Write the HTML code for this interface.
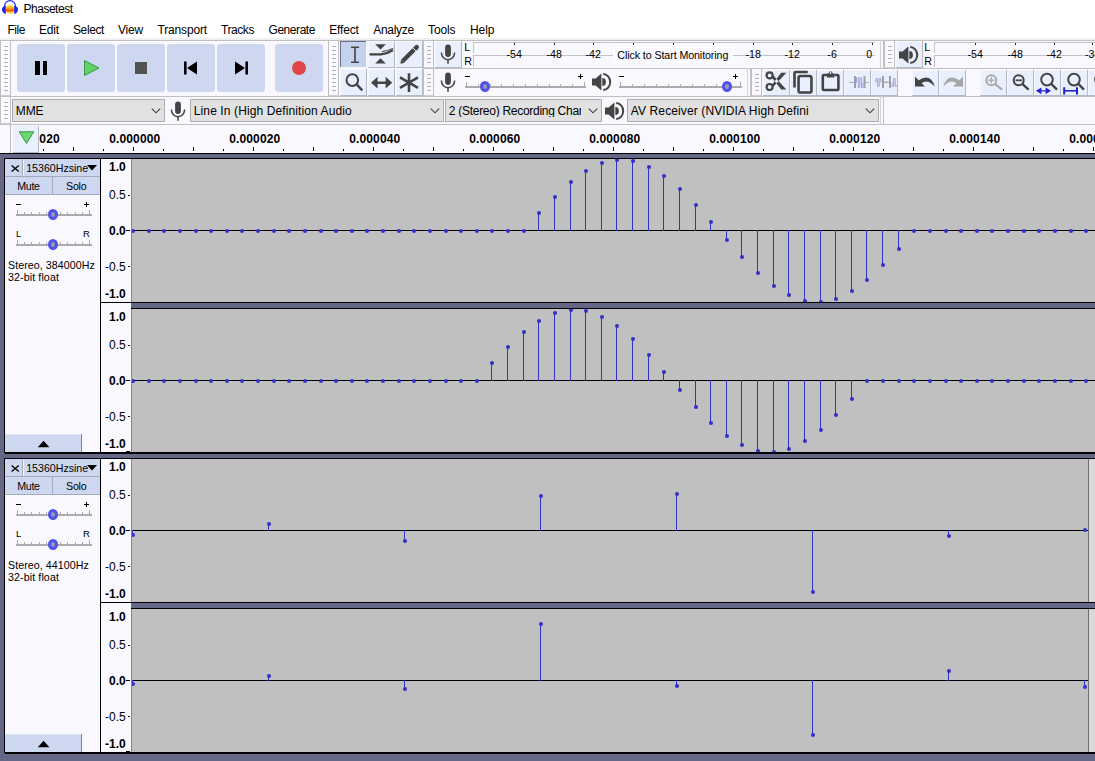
<!DOCTYPE html><html><head><meta charset="utf-8"><title>Phasetest</title><style>
html,body{margin:0;padding:0;}body{width:1095px;height:761px;position:relative;overflow:hidden;background:#fff;font-family:"Liberation Sans",sans-serif;}
div,svg,span{position:absolute;display:block;}span{white-space:pre;line-height:1;}
</style></head><body>
<svg style="left:0px;top:0px;" width="20" height="16" viewBox="0 0 20 16">
<defs><linearGradient id="wv" x1="0" y1="0" x2="0" y2="1"><stop offset="0" stop-color="#FFF3A0"/><stop offset="0.25" stop-color="#FFC21E"/><stop offset="0.5" stop-color="#FF8A00"/><stop offset="0.58" stop-color="#FF1E00"/><stop offset="0.68" stop-color="#FF8A00"/><stop offset="0.85" stop-color="#FFD23C"/><stop offset="1" stop-color="#FFF3A0"/></linearGradient></defs>
<ellipse cx="10" cy="9.4" rx="4.3" ry="4.8" fill="url(#wv)"/>
<path d="M4.6 6.4 V5.8 A5.4 5.2 0 0 1 15.4 5.8 V6.4" fill="none" stroke="#2222F2" stroke-width="1.2"/>
<path d="M5.8 5.4 Q1.6 6.6 2 9.8 Q2.4 13.4 5.8 14 Z" fill="#1E1EEE"/>
<path d="M14.2 5.4 Q18.4 6.6 18 9.8 Q17.6 13.4 14.2 14 Z" fill="#1E1EEE"/>
</svg>
<div style="left:0px;top:41px;width:1095px;height:84px;background:#F8F8FE;"></div>
<div style="left:0px;top:38px;width:1095px;height:2px;background:#F0F0F0;"></div>
<div style="left:0px;top:40px;width:1095px;height:1px;background:#C0C0C0;"></div>
<div style="left:423px;top:68px;width:672px;height:1px;background:#C0C0C0;"></div>
<div style="left:0px;top:96px;width:1095px;height:1px;background:#C0C0C0;"></div>
<div style="left:0px;top:124px;width:1095px;height:1px;background:#C0C0C0;"></div>
<div style="left:881px;top:97px;width:214px;height:27px;background:#F8F8FE;"></div>
<div style="left:0px;top:40px;width:329px;height:1px;background:#C0C0C0;"></div>
<div style="left:0px;top:96px;width:329px;height:1px;background:#C0C0C0;"></div>
<div style="left:0px;top:40px;width:1px;height:57px;background:#C0C0C0;"></div>
<div style="left:328px;top:40px;width:1px;height:57px;background:#C0C0C0;"></div>
<div style="left:10px;top:40px;width:1px;height:57px;background:#C0C0C0;"></div>
<div style="left:1px;top:95px;width:9px;height:1px;background:#CFCFD2;"></div>
<div style="left:4px;top:46px;width:4px;height:1px;background:#B2B2B6;"></div>
<div style="left:4px;top:50px;width:4px;height:1px;background:#B2B2B6;"></div>
<div style="left:4px;top:54px;width:4px;height:1px;background:#B2B2B6;"></div>
<div style="left:4px;top:58px;width:4px;height:1px;background:#B2B2B6;"></div>
<div style="left:4px;top:62px;width:4px;height:1px;background:#B2B2B6;"></div>
<div style="left:4px;top:66px;width:4px;height:1px;background:#B2B2B6;"></div>
<div style="left:4px;top:70px;width:4px;height:1px;background:#B2B2B6;"></div>
<div style="left:4px;top:74px;width:4px;height:1px;background:#B2B2B6;"></div>
<div style="left:4px;top:78px;width:4px;height:1px;background:#B2B2B6;"></div>
<div style="left:4px;top:82px;width:4px;height:1px;background:#B2B2B6;"></div>
<div style="left:4px;top:86px;width:4px;height:1px;background:#B2B2B6;"></div>
<div style="left:4px;top:90px;width:4px;height:1px;background:#B2B2B6;"></div>
<div style="left:328px;top:40px;width:96px;height:1px;background:#C0C0C0;"></div>
<div style="left:328px;top:96px;width:96px;height:1px;background:#C0C0C0;"></div>
<div style="left:328px;top:40px;width:1px;height:57px;background:#C0C0C0;"></div>
<div style="left:423px;top:40px;width:1px;height:57px;background:#C0C0C0;"></div>
<div style="left:338px;top:40px;width:1px;height:57px;background:#C0C0C0;"></div>
<div style="left:329px;top:95px;width:9px;height:1px;background:#CFCFD2;"></div>
<div style="left:332px;top:46px;width:4px;height:1px;background:#B2B2B6;"></div>
<div style="left:332px;top:50px;width:4px;height:1px;background:#B2B2B6;"></div>
<div style="left:332px;top:54px;width:4px;height:1px;background:#B2B2B6;"></div>
<div style="left:332px;top:58px;width:4px;height:1px;background:#B2B2B6;"></div>
<div style="left:332px;top:62px;width:4px;height:1px;background:#B2B2B6;"></div>
<div style="left:332px;top:66px;width:4px;height:1px;background:#B2B2B6;"></div>
<div style="left:332px;top:70px;width:4px;height:1px;background:#B2B2B6;"></div>
<div style="left:332px;top:74px;width:4px;height:1px;background:#B2B2B6;"></div>
<div style="left:332px;top:78px;width:4px;height:1px;background:#B2B2B6;"></div>
<div style="left:332px;top:82px;width:4px;height:1px;background:#B2B2B6;"></div>
<div style="left:332px;top:86px;width:4px;height:1px;background:#B2B2B6;"></div>
<div style="left:332px;top:90px;width:4px;height:1px;background:#B2B2B6;"></div>
<div style="left:423px;top:40px;width:458px;height:1px;background:#C0C0C0;"></div>
<div style="left:423px;top:68px;width:458px;height:1px;background:#C0C0C0;"></div>
<div style="left:423px;top:40px;width:1px;height:29px;background:#C0C0C0;"></div>
<div style="left:880px;top:40px;width:1px;height:29px;background:#D2D2D8;"></div>
<div style="left:433px;top:40px;width:1px;height:29px;background:#C0C0C0;"></div>
<div style="left:424px;top:67px;width:9px;height:1px;background:#CFCFD2;"></div>
<div style="left:427px;top:46px;width:4px;height:1px;background:#B2B2B6;"></div>
<div style="left:427px;top:50px;width:4px;height:1px;background:#B2B2B6;"></div>
<div style="left:427px;top:54px;width:4px;height:1px;background:#B2B2B6;"></div>
<div style="left:427px;top:58px;width:4px;height:1px;background:#B2B2B6;"></div>
<div style="left:427px;top:62px;width:4px;height:1px;background:#B2B2B6;"></div>
<div style="left:884px;top:40px;width:217px;height:1px;background:#C0C0C0;"></div>
<div style="left:884px;top:68px;width:217px;height:1px;background:#C0C0C0;"></div>
<div style="left:883px;top:40px;width:2px;height:29px;background:#C0C0C0;"></div>
<div style="left:1100px;top:40px;width:1px;height:29px;background:#C0C0C0;"></div>
<div style="left:894px;top:40px;width:1px;height:29px;background:#C0C0C0;"></div>
<div style="left:885px;top:67px;width:9px;height:1px;background:#CFCFD2;"></div>
<div style="left:888px;top:46px;width:4px;height:1px;background:#B2B2B6;"></div>
<div style="left:888px;top:50px;width:4px;height:1px;background:#B2B2B6;"></div>
<div style="left:888px;top:54px;width:4px;height:1px;background:#B2B2B6;"></div>
<div style="left:888px;top:58px;width:4px;height:1px;background:#B2B2B6;"></div>
<div style="left:888px;top:62px;width:4px;height:1px;background:#B2B2B6;"></div>
<div style="left:423px;top:68px;width:325px;height:1px;background:#C0C0C0;"></div>
<div style="left:423px;top:96px;width:325px;height:1px;background:#C0C0C0;"></div>
<div style="left:423px;top:68px;width:1px;height:29px;background:#C0C0C0;"></div>
<div style="left:747px;top:68px;width:1px;height:29px;background:#D2D2D8;"></div>
<div style="left:433px;top:68px;width:1px;height:29px;background:#C0C0C0;"></div>
<div style="left:424px;top:95px;width:9px;height:1px;background:#CFCFD2;"></div>
<div style="left:427px;top:74px;width:4px;height:1px;background:#B2B2B6;"></div>
<div style="left:427px;top:78px;width:4px;height:1px;background:#B2B2B6;"></div>
<div style="left:427px;top:82px;width:4px;height:1px;background:#B2B2B6;"></div>
<div style="left:427px;top:86px;width:4px;height:1px;background:#B2B2B6;"></div>
<div style="left:427px;top:90px;width:4px;height:1px;background:#B2B2B6;"></div>
<div style="left:751px;top:68px;width:350px;height:1px;background:#C0C0C0;"></div>
<div style="left:751px;top:96px;width:350px;height:1px;background:#C0C0C0;"></div>
<div style="left:750px;top:68px;width:2px;height:29px;background:#C0C0C0;"></div>
<div style="left:1100px;top:68px;width:1px;height:29px;background:#C0C0C0;"></div>
<div style="left:761px;top:68px;width:1px;height:29px;background:#C0C0C0;"></div>
<div style="left:752px;top:95px;width:9px;height:1px;background:#CFCFD2;"></div>
<div style="left:755px;top:74px;width:4px;height:1px;background:#B2B2B6;"></div>
<div style="left:755px;top:78px;width:4px;height:1px;background:#B2B2B6;"></div>
<div style="left:755px;top:82px;width:4px;height:1px;background:#B2B2B6;"></div>
<div style="left:755px;top:86px;width:4px;height:1px;background:#B2B2B6;"></div>
<div style="left:755px;top:90px;width:4px;height:1px;background:#B2B2B6;"></div>
<div style="left:0px;top:96px;width:881px;height:1px;background:#C0C0C0;"></div>
<div style="left:0px;top:124px;width:881px;height:1px;background:#C0C0C0;"></div>
<div style="left:0px;top:96px;width:1px;height:29px;background:#C0C0C0;"></div>
<div style="left:880px;top:96px;width:1px;height:29px;background:#D2D2D8;"></div>
<div style="left:10px;top:96px;width:1px;height:29px;background:#C0C0C0;"></div>
<div style="left:1px;top:123px;width:9px;height:1px;background:#CFCFD2;"></div>
<div style="left:4px;top:102px;width:4px;height:1px;background:#B2B2B6;"></div>
<div style="left:4px;top:106px;width:4px;height:1px;background:#B2B2B6;"></div>
<div style="left:4px;top:110px;width:4px;height:1px;background:#B2B2B6;"></div>
<div style="left:4px;top:114px;width:4px;height:1px;background:#B2B2B6;"></div>
<div style="left:4px;top:118px;width:4px;height:1px;background:#B2B2B6;"></div>
<div style="left:883px;top:97px;width:1px;height:27px;background:#C0C0C0;"></div>
<div style="left:17px;top:44px;width:48px;height:48px;background:#CDD8F0;border-radius:3px;"></div>
<div style="left:67px;top:44px;width:48px;height:48px;background:#CDD8F0;border-radius:3px;"></div>
<div style="left:117px;top:44px;width:48px;height:48px;background:#CDD8F0;border-radius:3px;"></div>
<div style="left:167px;top:44px;width:48px;height:48px;background:#CDD8F0;border-radius:3px;"></div>
<div style="left:217px;top:44px;width:48px;height:48px;background:#CDD8F0;border-radius:3px;"></div>
<div style="left:275px;top:44px;width:48px;height:48px;background:#CDD8F0;border-radius:3px;"></div>
<div style="left:35px;top:61px;width:4.5px;height:14px;background:#000;"></div>
<div style="left:42.5px;top:61px;width:4.5px;height:14px;background:#000;"></div>
<svg style="left:67px;top:44px;" width="48" height="48" viewBox="0 0 48 48"><path d="M17.5 16.5 L32 24 L17.5 31.5 Z" fill="#62D167" stroke="#3E9A46" stroke-width="1" stroke-linejoin="round"/></svg>
<div style="left:135px;top:62px;width:12px;height:12px;background:#525252;"></div>
<svg style="left:167px;top:44px;" width="48" height="48" viewBox="0 0 48 48"><rect x="17" y="17.5" width="2.6" height="13" fill="#000"/><path d="M30 17.5 V30.5 L20 24 Z" fill="#000"/></svg>
<svg style="left:217px;top:44px;" width="48" height="48" viewBox="0 0 48 48"><rect x="28.4" y="17.5" width="2.6" height="13" fill="#000"/><path d="M18 17.5 V30.5 L28 24 Z" fill="#000"/></svg>
<div style="left:292px;top:61px;width:14px;height:14px;background:#E0454A;border-radius:7px;"></div>
<div style="left:340px;top:41px;width:27px;height:27px;background:#C5D2EE;"></div>
<div style="left:340px;top:41px;width:27px;height:1px;background:#6B7086;"></div>
<div style="left:340px;top:41px;width:1px;height:27px;background:#6B7086;"></div>
<div style="left:340px;top:67px;width:27px;height:1px;background:#F4F6FD;"></div>
<div style="left:366px;top:41px;width:1px;height:27px;background:#F4F6FD;"></div>
<div style="left:368px;top:41px;width:27px;height:27px;background:#E9EFFC;"></div>
<div style="left:368px;top:67px;width:27px;height:1px;background:#B4B9C8;"></div>
<div style="left:394px;top:41px;width:1px;height:27px;background:#B4B9C8;"></div>
<div style="left:368px;top:41px;width:26px;height:1px;background:#F6F8FE;"></div>
<div style="left:368px;top:41px;width:1px;height:26px;background:#F6F8FE;"></div>
<div style="left:396px;top:41px;width:27px;height:27px;background:#E9EFFC;"></div>
<div style="left:396px;top:67px;width:27px;height:1px;background:#B4B9C8;"></div>
<div style="left:422px;top:41px;width:1px;height:27px;background:#B4B9C8;"></div>
<div style="left:396px;top:41px;width:26px;height:1px;background:#F6F8FE;"></div>
<div style="left:396px;top:41px;width:1px;height:26px;background:#F6F8FE;"></div>
<div style="left:340px;top:69px;width:27px;height:27px;background:#E9EFFC;"></div>
<div style="left:340px;top:95px;width:27px;height:1px;background:#B4B9C8;"></div>
<div style="left:366px;top:69px;width:1px;height:27px;background:#B4B9C8;"></div>
<div style="left:340px;top:69px;width:26px;height:1px;background:#F6F8FE;"></div>
<div style="left:340px;top:69px;width:1px;height:26px;background:#F6F8FE;"></div>
<div style="left:368px;top:69px;width:27px;height:27px;background:#E9EFFC;"></div>
<div style="left:368px;top:95px;width:27px;height:1px;background:#B4B9C8;"></div>
<div style="left:394px;top:69px;width:1px;height:27px;background:#B4B9C8;"></div>
<div style="left:368px;top:69px;width:26px;height:1px;background:#F6F8FE;"></div>
<div style="left:368px;top:69px;width:1px;height:26px;background:#F6F8FE;"></div>
<div style="left:396px;top:69px;width:27px;height:27px;background:#E9EFFC;"></div>
<div style="left:396px;top:95px;width:27px;height:1px;background:#B4B9C8;"></div>
<div style="left:422px;top:69px;width:1px;height:27px;background:#B4B9C8;"></div>
<div style="left:396px;top:69px;width:26px;height:1px;background:#F6F8FE;"></div>
<div style="left:396px;top:69px;width:1px;height:26px;background:#F6F8FE;"></div>
<svg style="left:340px;top:41px;" width="27" height="27" viewBox="0 0 27 27"><path d="M11 6.3 H19 M11 21.3 H19 M15 6.3 V21.3" stroke="#444" stroke-width="1.6" fill="none"/></svg>
<svg style="left:368px;top:41px;" width="27" height="27" viewBox="0 0 27 27"><path d="M7.2 3.2 H17.8 L12.5 8.4 Z M7.2 22.4 H17.8 L12.5 17.3 Z" fill="#444"/><path d="M1.5 13.4 H13 Q19.5 12.6 25 8.9" stroke="#444" stroke-width="2.4" fill="none"/><path d="M14 10.6 Q20 9.8 25 7.4" stroke="#444" stroke-width="1" fill="none"/></svg>
<svg style="left:396px;top:41px;" width="27" height="27" viewBox="0 0 27 27"><path d="M6.8 20 L18 8.8" stroke="#444" stroke-width="4.4"/><path d="M4.3 22.7 L5.2 18.4 L8.6 21.8 Z" fill="#444"/><path d="M19.2 7.6 L20.7 6.1" stroke="#444" stroke-width="4.4" stroke-linecap="round"/><path d="M16.3 6.3 L20.7 10.7" stroke="#E9EFFC" stroke-width="0.9"/></svg>
<svg style="left:340px;top:69px;" width="27" height="27" viewBox="0 0 27 27"><circle cx="12.3" cy="11.1" r="5.8" fill="none" stroke="#444" stroke-width="2"/><path d="M16.4 15.2 L22.3 21.4" stroke="#444" stroke-width="2.4"/></svg>
<svg style="left:368px;top:69px;" width="27" height="27" viewBox="0 0 27 27"><path d="M3 13.7 L9.6 7.8 V12.4 H17.6 V7.8 L24.2 13.7 L17.6 19.6 V15 H9.6 V19.6 Z" fill="#444"/></svg>
<svg style="left:396px;top:69px;" width="27" height="27" viewBox="0 0 27 27"><path d="M13 4.2 V23 M4 8.4 L22 18.8 M22 8.4 L4 18.8" stroke="#444" stroke-width="2.6" fill="none"/></svg>
<div style="left:435px;top:41px;width:27px;height:27px;background:#E9EFFC;"></div>
<div style="left:435px;top:67px;width:27px;height:1px;background:#B4B9C8;"></div>
<div style="left:461px;top:41px;width:1px;height:27px;background:#B4B9C8;"></div>
<div style="left:435px;top:41px;width:26px;height:1px;background:#F6F8FE;"></div>
<div style="left:435px;top:41px;width:1px;height:26px;background:#F6F8FE;"></div>
<svg style="left:437.9px;top:43.5px;" width="20" height="21" viewBox="0 0 20 21"><rect x="7.1" y="0.6" width="5.8" height="12.4" rx="2.9" fill="#444"/><path d="M3.5 8.4 V9.2 a6.5 6.5 0 0 0 13 0 V8.4" fill="none" stroke="#444" stroke-width="1.5"/><path d="M10 15.6 V19.8" stroke="#444" stroke-width="1.5"/></svg>
<div style="left:473px;top:42px;width:402px;height:1px;background:#C2C2C8;"></div>
<div style="left:473px;top:42px;width:1px;height:11px;background:#C2C2C8;"></div>
<div style="left:473px;top:55px;width:402px;height:1px;background:#C2C2C8;"></div>
<div style="left:473px;top:55px;width:1px;height:12px;background:#C2C2C8;"></div>
<div style="left:875px;top:42px;width:1px;height:25px;background:#FFFFFF;"></div>
<div style="left:633px;top:43px;width:1px;height:2px;background:#222;"></div>
<div style="left:673px;top:43px;width:1px;height:2px;background:#222;"></div>
<div style="left:713px;top:43px;width:1px;height:2px;background:#222;"></div>
<div style="left:514px;top:43px;width:1px;height:2px;background:#222;"></div>
<div style="left:554px;top:43px;width:1px;height:2px;background:#222;"></div>
<div style="left:593px;top:43px;width:1px;height:2px;background:#222;"></div>
<div style="left:753px;top:43px;width:1px;height:2px;background:#222;"></div>
<div style="left:792px;top:43px;width:1px;height:2px;background:#222;"></div>
<div style="left:832px;top:43px;width:1px;height:2px;background:#222;"></div>
<div style="left:872px;top:43px;width:1px;height:2px;background:#222;"></div>
<div style="left:613px;top:47px;width:120px;height:16px;background:#F8F8FE;border:1px solid #FFFFFF;box-sizing:border-box;"></div>
<div style="left:896px;top:41px;width:27px;height:27px;background:#E9EFFC;"></div>
<div style="left:896px;top:67px;width:27px;height:1px;background:#B4B9C8;"></div>
<div style="left:922px;top:41px;width:1px;height:27px;background:#B4B9C8;"></div>
<div style="left:896px;top:41px;width:26px;height:1px;background:#F6F8FE;"></div>
<div style="left:896px;top:41px;width:1px;height:26px;background:#F6F8FE;"></div>
<svg style="left:898px;top:44.5px;" width="22" height="20" viewBox="0 0 22 20"><g transform="translate(1,10)"><path d="M0 -3.6 H3.6 L9.4 -8.4 V8.4 L3.6 3.6 H0 Z" fill="#444"/><path d="M10.3 -4.1 A3.6 4.1 0 0 1 10.3 4.1 Z" fill="#444"/><path d="M11.2 -8 A7 8 0 0 1 11.2 8" fill="none" stroke="#444" stroke-width="2"/></g></svg>
<div style="left:934px;top:42px;width:170px;height:1px;background:#C2C2C8;"></div>
<div style="left:934px;top:42px;width:1px;height:11px;background:#C2C2C8;"></div>
<div style="left:934px;top:55px;width:170px;height:1px;background:#C2C2C8;"></div>
<div style="left:934px;top:55px;width:1px;height:12px;background:#C2C2C8;"></div>
<div style="left:975px;top:43px;width:1px;height:2px;background:#222;"></div>
<div style="left:1015px;top:43px;width:1px;height:2px;background:#222;"></div>
<div style="left:1054px;top:43px;width:1px;height:2px;background:#222;"></div>
<div style="left:1092px;top:43px;width:1px;height:2px;background:#222;"></div>
<svg style="left:437.9px;top:72.3px;" width="20" height="21" viewBox="0 0 20 21"><rect x="7.1" y="0.6" width="5.8" height="12.4" rx="2.9" fill="#444"/><path d="M3.5 8.4 V9.2 a6.5 6.5 0 0 0 13 0 V8.4" fill="none" stroke="#444" stroke-width="1.5"/><path d="M10 15.6 V19.8" stroke="#444" stroke-width="1.5"/></svg>
<div style="left:465px;top:86px;width:121px;height:2px;background:#ABABAB;"></div>
<div style="left:466px;top:82px;width:1px;height:4px;background:#ABABAB;"></div>
<div style="left:478px;top:84px;width:1px;height:2px;background:#ABABAB;"></div>
<div style="left:490px;top:84px;width:1px;height:2px;background:#ABABAB;"></div>
<div style="left:501px;top:84px;width:1px;height:2px;background:#ABABAB;"></div>
<div style="left:513px;top:84px;width:1px;height:2px;background:#ABABAB;"></div>
<div style="left:525px;top:84px;width:1px;height:2px;background:#ABABAB;"></div>
<div style="left:537px;top:84px;width:1px;height:2px;background:#ABABAB;"></div>
<div style="left:549px;top:84px;width:1px;height:2px;background:#ABABAB;"></div>
<div style="left:560px;top:84px;width:1px;height:2px;background:#ABABAB;"></div>
<div style="left:572px;top:84px;width:1px;height:2px;background:#ABABAB;"></div>
<div style="left:584px;top:82px;width:1px;height:4px;background:#ABABAB;"></div>
<div style="left:480px;top:81.0px;width:10px;height:11px;border-radius:5px/5.5px;background:#9A9AB4;border:3.7px solid #4F52E8;box-sizing:border-box;"></div>
<div style="left:465px;top:76px;width:5px;height:1px;background:#000;"></div>
<div style="left:578px;top:76px;width:5px;height:1px;background:#000;"></div>
<div style="left:580px;top:74px;width:1px;height:5px;background:#000;"></div>
<svg style="left:590.5px;top:72.3px;" width="22" height="20" viewBox="0 0 22 20"><g transform="translate(1,10)"><path d="M0 -3.6 H3.6 L9.4 -8.4 V8.4 L3.6 3.6 H0 Z" fill="#444"/><path d="M10.3 -4.1 A3.6 4.1 0 0 1 10.3 4.1 Z" fill="#444"/><path d="M11.2 -8 A7 8 0 0 1 11.2 8" fill="none" stroke="#444" stroke-width="2"/></g></svg>
<div style="left:619px;top:86px;width:123px;height:2px;background:#ABABAB;"></div>
<div style="left:620px;top:82px;width:1px;height:4px;background:#ABABAB;"></div>
<div style="left:632px;top:84px;width:1px;height:2px;background:#ABABAB;"></div>
<div style="left:644px;top:84px;width:1px;height:2px;background:#ABABAB;"></div>
<div style="left:656px;top:84px;width:1px;height:2px;background:#ABABAB;"></div>
<div style="left:668px;top:84px;width:1px;height:2px;background:#ABABAB;"></div>
<div style="left:680px;top:84px;width:1px;height:2px;background:#ABABAB;"></div>
<div style="left:692px;top:84px;width:1px;height:2px;background:#ABABAB;"></div>
<div style="left:704px;top:84px;width:1px;height:2px;background:#ABABAB;"></div>
<div style="left:716px;top:84px;width:1px;height:2px;background:#ABABAB;"></div>
<div style="left:728px;top:84px;width:1px;height:2px;background:#ABABAB;"></div>
<div style="left:740px;top:82px;width:1px;height:4px;background:#ABABAB;"></div>
<div style="left:722px;top:81.0px;width:10px;height:11px;border-radius:5px/5.5px;background:#9A9AB4;border:3.7px solid #4F52E8;box-sizing:border-box;"></div>
<div style="left:619px;top:76px;width:5px;height:1px;background:#000;"></div>
<div style="left:733px;top:76px;width:5px;height:1px;background:#000;"></div>
<div style="left:735px;top:74px;width:1px;height:5px;background:#000;"></div>
<div style="left:763px;top:70px;width:27px;height:26px;background:#E9EFFC;"></div>
<div style="left:763px;top:95px;width:27px;height:1px;background:#B4B9C8;"></div>
<div style="left:789px;top:70px;width:1px;height:26px;background:#B4B9C8;"></div>
<div style="left:763px;top:70px;width:26px;height:1px;background:#F6F8FE;"></div>
<div style="left:763px;top:70px;width:1px;height:25px;background:#F6F8FE;"></div>
<div style="left:790px;top:70px;width:27px;height:26px;background:#E9EFFC;"></div>
<div style="left:790px;top:95px;width:27px;height:1px;background:#B4B9C8;"></div>
<div style="left:816px;top:70px;width:1px;height:26px;background:#B4B9C8;"></div>
<div style="left:790px;top:70px;width:26px;height:1px;background:#F6F8FE;"></div>
<div style="left:790px;top:70px;width:1px;height:25px;background:#F6F8FE;"></div>
<div style="left:817px;top:70px;width:27px;height:26px;background:#E9EFFC;"></div>
<div style="left:817px;top:95px;width:27px;height:1px;background:#B4B9C8;"></div>
<div style="left:843px;top:70px;width:1px;height:26px;background:#B4B9C8;"></div>
<div style="left:817px;top:70px;width:26px;height:1px;background:#F6F8FE;"></div>
<div style="left:817px;top:70px;width:1px;height:25px;background:#F6F8FE;"></div>
<div style="left:844px;top:70px;width:27px;height:26px;background:#E9EFFC;"></div>
<div style="left:844px;top:95px;width:27px;height:1px;background:#B4B9C8;"></div>
<div style="left:870px;top:70px;width:1px;height:26px;background:#B4B9C8;"></div>
<div style="left:844px;top:70px;width:26px;height:1px;background:#F6F8FE;"></div>
<div style="left:844px;top:70px;width:1px;height:25px;background:#F6F8FE;"></div>
<div style="left:871px;top:70px;width:27px;height:26px;background:#E9EFFC;"></div>
<div style="left:871px;top:95px;width:27px;height:1px;background:#B4B9C8;"></div>
<div style="left:897px;top:70px;width:1px;height:26px;background:#B4B9C8;"></div>
<div style="left:871px;top:70px;width:26px;height:1px;background:#F6F8FE;"></div>
<div style="left:871px;top:70px;width:1px;height:25px;background:#F6F8FE;"></div>
<div style="left:912px;top:70px;width:27px;height:26px;background:#E9EFFC;"></div>
<div style="left:912px;top:95px;width:27px;height:1px;background:#B4B9C8;"></div>
<div style="left:938px;top:70px;width:1px;height:26px;background:#B4B9C8;"></div>
<div style="left:912px;top:70px;width:26px;height:1px;background:#F6F8FE;"></div>
<div style="left:912px;top:70px;width:1px;height:25px;background:#F6F8FE;"></div>
<div style="left:939px;top:70px;width:27px;height:26px;background:#E9EFFC;"></div>
<div style="left:939px;top:95px;width:27px;height:1px;background:#B4B9C8;"></div>
<div style="left:965px;top:70px;width:1px;height:26px;background:#B4B9C8;"></div>
<div style="left:939px;top:70px;width:26px;height:1px;background:#F6F8FE;"></div>
<div style="left:939px;top:70px;width:1px;height:25px;background:#F6F8FE;"></div>
<div style="left:980px;top:70px;width:27px;height:26px;background:#E9EFFC;"></div>
<div style="left:980px;top:95px;width:27px;height:1px;background:#B4B9C8;"></div>
<div style="left:1006px;top:70px;width:1px;height:26px;background:#B4B9C8;"></div>
<div style="left:980px;top:70px;width:26px;height:1px;background:#F6F8FE;"></div>
<div style="left:980px;top:70px;width:1px;height:25px;background:#F6F8FE;"></div>
<div style="left:1007px;top:70px;width:27px;height:26px;background:#E9EFFC;"></div>
<div style="left:1007px;top:95px;width:27px;height:1px;background:#B4B9C8;"></div>
<div style="left:1033px;top:70px;width:1px;height:26px;background:#B4B9C8;"></div>
<div style="left:1007px;top:70px;width:26px;height:1px;background:#F6F8FE;"></div>
<div style="left:1007px;top:70px;width:1px;height:25px;background:#F6F8FE;"></div>
<div style="left:1034px;top:70px;width:27px;height:26px;background:#E9EFFC;"></div>
<div style="left:1034px;top:95px;width:27px;height:1px;background:#B4B9C8;"></div>
<div style="left:1060px;top:70px;width:1px;height:26px;background:#B4B9C8;"></div>
<div style="left:1034px;top:70px;width:26px;height:1px;background:#F6F8FE;"></div>
<div style="left:1034px;top:70px;width:1px;height:25px;background:#F6F8FE;"></div>
<div style="left:1061px;top:70px;width:27px;height:26px;background:#E9EFFC;"></div>
<div style="left:1061px;top:95px;width:27px;height:1px;background:#B4B9C8;"></div>
<div style="left:1087px;top:70px;width:1px;height:26px;background:#B4B9C8;"></div>
<div style="left:1061px;top:70px;width:26px;height:1px;background:#F6F8FE;"></div>
<div style="left:1061px;top:70px;width:1px;height:25px;background:#F6F8FE;"></div>
<div style="left:1088px;top:70px;width:27px;height:26px;background:#E9EFFC;"></div>
<div style="left:1088px;top:95px;width:27px;height:1px;background:#B4B9C8;"></div>
<div style="left:1114px;top:70px;width:1px;height:26px;background:#B4B9C8;"></div>
<div style="left:1088px;top:70px;width:26px;height:1px;background:#F6F8FE;"></div>
<div style="left:1088px;top:70px;width:1px;height:25px;background:#F6F8FE;"></div>
<div style="left:898px;top:69px;width:14px;height:27px;background:#F8F8FE;"></div>
<div style="left:966px;top:69px;width:14px;height:27px;background:#F8F8FE;"></div>
<svg style="left:763px;top:68px;" width="27" height="27" viewBox="0 0 27 27"><circle cx="6.6" cy="7.4" r="3" fill="none" stroke="#444" stroke-width="2.2"/><circle cx="6.6" cy="19" r="3" fill="none" stroke="#444" stroke-width="2.2"/><path d="M8.6 9.2 L10.4 7.6 L23.3 21.6 L18.2 21.6 Z M8.6 17.2 L10.4 18.8 L23.3 4.8 L18.2 4.8 Z" fill="#444"/></svg>
<svg style="left:790px;top:68px;" width="27" height="27" viewBox="0 0 27 27"><rect x="8.55" y="8.05" width="12.9" height="16.4" rx="1.8" fill="none" stroke="#444" stroke-width="2.6"/><path d="M4.5 19.5 V5.2 Q4.5 4 5.7 4 H17.75" fill="none" stroke="#444" stroke-width="2.6"/></svg>
<svg style="left:817px;top:68px;" width="27" height="27" viewBox="0 0 27 27"><path d="M10 7 H6.8 Q5.8 7 5.8 8 V21 Q5.8 22 6.8 22 H20.4 Q21.4 22 21.4 21 V8 Q21.4 7 20.4 7 H17.4" fill="none" stroke="#444" stroke-width="2.6"/><path d="M9.8 9.6 V5.6 H11.4 Q13.6 0.8 15.8 5.6 H17.4 V9.6 Z" fill="#444"/><circle cx="13.6" cy="5" r="0.9" fill="#E9EFFC"/></svg>
<svg style="left:844px;top:68px;" width="27" height="27" viewBox="0 0 27 27"><path d="M5 14.5 H10 M21 14.5 H25" stroke="#A9AEDD" stroke-width="1"/><path d="M11 8 V20 M20.5 8 V20" stroke="#A0A0A0" stroke-width="2"/><path d="M12.5 14.5 V10 Q13.5 8 14.2 10 V19 Q15 21 15.8 19 V10 Q16.6 8 17.4 10 V19 Q18.2 21 19 19 V14.5" fill="none" stroke="#9EA3DA" stroke-width="1"/></svg>
<svg style="left:871px;top:68px;" width="27" height="27" viewBox="0 0 27 27"><path d="M5 14.5 V11 Q5.8 9 6.6 11 V18 Q7.4 20 8.2 18 V11 Q9 9 9.8 11 V14.5 M21 14.5 V18 Q21.8 20 22.6 18 V11 Q23.4 9 24.2 11 V18 Q25 20 25.4 17" fill="none" stroke="#9EA3DA" stroke-width="1"/><path d="M12 8 V20 M19 8 V20" stroke="#A0A0A0" stroke-width="2"/><path d="M12 14.2 H19" stroke="#A8A8B8" stroke-width="1.4"/></svg>
<svg style="left:912px;top:68px;" width="27" height="27" viewBox="0 0 27 27"><path d="M3 8.6 V18.6 H13 L9.6 15.2 Q15.5 10.5 22.8 18.6 Q18.5 4.5 6.6 12.2 Z" fill="#444"/></svg>
<svg style="left:939px;top:68px;" width="27" height="27" viewBox="0 0 27 27"><path d="M24 8.6 V18.6 H14 L17.4 15.2 Q11.5 10.5 4.2 18.6 Q8.5 4.5 20.4 12.2 Z" fill="#A6A6A6"/></svg>
<svg style="left:980px;top:68px;" width="27" height="27" viewBox="0 0 27 27"><circle cx="11.3" cy="12.3" r="5" fill="none" stroke="#ABABAB" stroke-width="2"/><path d="M14.9 15.9 L22 21.6" stroke="#ABABAB" stroke-width="2.4"/><path d="M8.3 12.3 H14.3 M11.3 9.3 V15.3" stroke="#ABABAB" stroke-width="1.4"/></svg>
<svg style="left:1007px;top:68px;" width="27" height="27" viewBox="0 0 27 27"><circle cx="11.7" cy="12.3" r="5" fill="none" stroke="#444" stroke-width="2"/><path d="M15.299999999999999 15.9 L21.6 21.6" stroke="#444" stroke-width="2.4"/><path d="M8.5 12.3 H14.9" stroke="#444" stroke-width="1.8"/></svg>
<svg style="left:1034px;top:68px;" width="27" height="27" viewBox="0 0 27 27"><circle cx="13" cy="11.6" r="5.8" fill="none" stroke="#444" stroke-width="2"/><path d="M17.176000000000002 15.776 L23 21.6" stroke="#444" stroke-width="2.4"/><path d="M5 22.8 H14" stroke="#2222CC" stroke-width="1.2"/><path d="M2 22.8 L7.4 19.4 V26.2 Z M17 22.8 L11.6 19.4 V26.2 Z" fill="#2222CC"/></svg>
<svg style="left:1061px;top:68px;" width="27" height="27" viewBox="0 0 27 27"><circle cx="13" cy="11.6" r="5.8" fill="none" stroke="#444" stroke-width="2"/><path d="M17.176000000000002 15.776 L23 21.6" stroke="#444" stroke-width="2.4"/><path d="M3 22.8 H16" stroke="#2222CC" stroke-width="1.6"/><path d="M3.2 19.2 V26.4 M16 19.2 V26.4" stroke="#2222CC" stroke-width="2"/></svg>
<svg style="left:1088px;top:68px;" width="27" height="27" viewBox="0 0 27 27"><circle cx="13" cy="11.6" r="5.8" fill="none" stroke="#444" stroke-width="2"/><path d="M17.176000000000002 15.776 L23 21.6" stroke="#444" stroke-width="2.4"/></svg>
<div style="left:12px;top:99px;width:153px;height:23px;background:#E1E1E1;border:1px solid #ADADAD;box-sizing:border-box;"></div>
<svg style="left:151px;top:108px;" width="10" height="6" viewBox="0 0 10 6"><path d="M0.8 0.6 L5 4.8 L9.2 0.6" fill="none" stroke="#3C3C3C" stroke-width="1.1"/></svg>
<svg style="left:168px;top:101px;" width="20" height="21" viewBox="0 0 20 21"><rect x="7.1" y="0.6" width="5.8" height="12.4" rx="2.9" fill="#444"/><path d="M3.5 8.4 V9.2 a6.5 6.5 0 0 0 13 0 V8.4" fill="none" stroke="#444" stroke-width="1.5"/><path d="M10 15.6 V19.8" stroke="#444" stroke-width="1.5"/></svg>
<div style="left:190px;top:99px;width:254px;height:23px;background:#E1E1E1;border:1px solid #ADADAD;box-sizing:border-box;"></div>
<svg style="left:430px;top:108px;" width="10" height="6" viewBox="0 0 10 6"><path d="M0.8 0.6 L5 4.8 L9.2 0.6" fill="none" stroke="#3C3C3C" stroke-width="1.1"/></svg>
<div style="left:445px;top:99px;width:157px;height:23px;background:#E1E1E1;border:1px solid #ADADAD;box-sizing:border-box;"></div>
<svg style="left:588px;top:108px;" width="10" height="6" viewBox="0 0 10 6"><path d="M0.8 0.6 L5 4.8 L9.2 0.6" fill="none" stroke="#3C3C3C" stroke-width="1.1"/></svg>
<svg style="left:603.7px;top:100.5px;" width="22" height="20" viewBox="0 0 22 20"><g transform="translate(1,10)"><path d="M0 -3.6 H3.6 L9.4 -8.4 V8.4 L3.6 3.6 H0 Z" fill="#444"/><path d="M10.3 -4.1 A3.6 4.1 0 0 1 10.3 4.1 Z" fill="#444"/><path d="M11.2 -8 A7 8 0 0 1 11.2 8" fill="none" stroke="#444" stroke-width="2"/></g></svg>
<div style="left:627px;top:99px;width:252px;height:23px;background:#E1E1E1;border:1px solid #ADADAD;box-sizing:border-box;"></div>
<svg style="left:865px;top:108px;" width="10" height="6" viewBox="0 0 10 6"><path d="M0.8 0.6 L5 4.8 L9.2 0.6" fill="none" stroke="#3C3C3C" stroke-width="1.1"/></svg>
<div style="left:0px;top:125px;width:1095px;height:28px;background:#F8F8FE;"></div>
<div style="left:13px;top:126px;width:25px;height:26px;background:#E9EFFC;"></div>
<div style="left:38px;top:126px;width:1px;height:27px;background:#B4B9C8;"></div>
<div style="left:13px;top:152px;width:26px;height:1px;background:#B4B9C8;"></div>
<div style="left:10px;top:125px;width:1px;height:28px;background:#C0C0C0;"></div>
<div style="left:0px;top:153px;width:1095px;height:1px;background:#000;"></div>
<svg style="left:13px;top:126px;" width="26" height="26" viewBox="0 0 26 26"><path d="M6.2 5.8 H20.8 L13.5 17.4 Z" fill="#6CD672" stroke="#3C9444" stroke-width="1" stroke-linejoin="round"/></svg>
<div style="left:43px;top:149px;width:1px;height:2px;background:#000;"></div>
<div style="left:73px;top:147px;width:1px;height:4px;background:#000;"></div>
<div style="left:103px;top:149px;width:1px;height:2px;background:#000;"></div>
<div style="left:133px;top:147px;width:1px;height:4px;background:#000;"></div>
<div style="left:163px;top:149px;width:1px;height:2px;background:#000;"></div>
<div style="left:193px;top:147px;width:1px;height:4px;background:#000;"></div>
<div style="left:223px;top:149px;width:1px;height:2px;background:#000;"></div>
<div style="left:253px;top:147px;width:1px;height:4px;background:#000;"></div>
<div style="left:283px;top:149px;width:1px;height:2px;background:#000;"></div>
<div style="left:313px;top:147px;width:1px;height:4px;background:#000;"></div>
<div style="left:343px;top:149px;width:1px;height:2px;background:#000;"></div>
<div style="left:373px;top:147px;width:1px;height:4px;background:#000;"></div>
<div style="left:403px;top:149px;width:1px;height:2px;background:#000;"></div>
<div style="left:433px;top:147px;width:1px;height:4px;background:#000;"></div>
<div style="left:463px;top:149px;width:1px;height:2px;background:#000;"></div>
<div style="left:493px;top:147px;width:1px;height:4px;background:#000;"></div>
<div style="left:523px;top:149px;width:1px;height:2px;background:#000;"></div>
<div style="left:553px;top:147px;width:1px;height:4px;background:#000;"></div>
<div style="left:583px;top:149px;width:1px;height:2px;background:#000;"></div>
<div style="left:613px;top:147px;width:1px;height:4px;background:#000;"></div>
<div style="left:643px;top:149px;width:1px;height:2px;background:#000;"></div>
<div style="left:673px;top:147px;width:1px;height:4px;background:#000;"></div>
<div style="left:703px;top:149px;width:1px;height:2px;background:#000;"></div>
<div style="left:733px;top:147px;width:1px;height:4px;background:#000;"></div>
<div style="left:763px;top:149px;width:1px;height:2px;background:#000;"></div>
<div style="left:793px;top:147px;width:1px;height:4px;background:#000;"></div>
<div style="left:823px;top:149px;width:1px;height:2px;background:#000;"></div>
<div style="left:853px;top:147px;width:1px;height:4px;background:#000;"></div>
<div style="left:883px;top:149px;width:1px;height:2px;background:#000;"></div>
<div style="left:913px;top:147px;width:1px;height:4px;background:#000;"></div>
<div style="left:943px;top:149px;width:1px;height:2px;background:#000;"></div>
<div style="left:973px;top:147px;width:1px;height:4px;background:#000;"></div>
<div style="left:1003px;top:149px;width:1px;height:2px;background:#000;"></div>
<div style="left:1033px;top:147px;width:1px;height:4px;background:#000;"></div>
<div style="left:1063px;top:149px;width:1px;height:2px;background:#000;"></div>
<div style="left:1093px;top:147px;width:1px;height:4px;background:#000;"></div>
<div style="left:0px;top:154px;width:1095px;height:607px;background:#646886;"></div>
<div style="left:4px;top:158px;width:1095px;height:295px;background:#000;"></div>
<div style="left:5px;top:453px;width:1095px;height:1px;background:#000;"></div>
<div style="left:5px;top:159px;width:95px;height:293px;background:#F8F8FE;"></div>
<div style="left:101px;top:159px;width:30px;height:293px;background:#F8F8FE;"></div>
<div style="left:132px;top:159px;width:963px;height:143px;background:#C0C0C0;"></div>
<div style="left:132px;top:230px;width:963px;height:1px;background:#000;"></div>
<div style="left:126px;top:230px;width:4px;height:1px;background:#000;"></div>
<div style="left:128px;top:195px;width:2px;height:1px;background:#000;"></div>
<div style="left:128px;top:266px;width:2px;height:1px;background:#000;"></div>
<div style="left:131px;top:159px;width:1px;height:143px;background:#85858C;"></div>
<div style="left:132px;top:309px;width:963px;height:143px;background:#C0C0C0;"></div>
<div style="left:132px;top:380px;width:963px;height:1px;background:#000;"></div>
<div style="left:126px;top:380px;width:4px;height:1px;background:#000;"></div>
<div style="left:128px;top:345px;width:2px;height:1px;background:#000;"></div>
<div style="left:128px;top:416px;width:2px;height:1px;background:#000;"></div>
<div style="left:131px;top:309px;width:1px;height:143px;background:#85858C;"></div>
<div style="left:126px;top:451px;width:4px;height:1px;background:#000;"></div>
<div style="left:131px;top:302px;width:964px;height:7px;background:#000;"></div>
<div style="left:131px;top:303px;width:964px;height:5px;background:#646886;"></div>
<div style="left:101px;top:302px;width:30px;height:7px;background:#F8F8FE;"></div>
<div style="left:101px;top:302px;width:30px;height:1px;background:#000;"></div>
<div style="left:5px;top:159px;width:18px;height:17px;background:#CDD8F0;"></div>
<div style="left:24px;top:159px;width:76px;height:17px;background:#CDD8F0;"></div>
<div style="left:5px;top:177px;width:47px;height:17px;background:#CDD8F0;"></div>
<div style="left:53px;top:177px;width:47px;height:17px;background:#CDD8F0;"></div>
<div style="left:5px;top:176px;width:95px;height:1px;background:#A4AABC;"></div>
<div style="left:22px;top:159px;width:1px;height:17px;background:#A4AABC;"></div>
<div style="left:23px;top:159px;width:1px;height:17px;background:#F4F6FD;"></div>
<div style="left:5px;top:194px;width:95px;height:1px;background:#A4AABC;"></div>
<div style="left:52px;top:177px;width:1px;height:17px;background:#A4AABC;"></div>
<svg style="left:5px;top:159px;" width="18" height="17" viewBox="0 0 18 17"><path d="M6.6 6.4 L13.8 12.6 M13.8 6.4 L6.6 12.6" stroke="#000" stroke-width="1.3"/></svg>
<svg style="left:86px;top:164px;" width="12" height="8" viewBox="0 0 12 8"><path d="M1 1 H11 L6 6.5 Z" fill="#000"/></svg>
<div style="left:16px;top:214px;width:76px;height:2px;background:#ABABAB;"></div>
<div style="left:17px;top:210px;width:1px;height:4px;background:#ABABAB;"></div>
<div style="left:24px;top:212px;width:1px;height:2px;background:#ABABAB;"></div>
<div style="left:31px;top:212px;width:1px;height:2px;background:#ABABAB;"></div>
<div style="left:39px;top:212px;width:1px;height:2px;background:#ABABAB;"></div>
<div style="left:46px;top:212px;width:1px;height:2px;background:#ABABAB;"></div>
<div style="left:53px;top:212px;width:1px;height:2px;background:#ABABAB;"></div>
<div style="left:60px;top:212px;width:1px;height:2px;background:#ABABAB;"></div>
<div style="left:67px;top:212px;width:1px;height:2px;background:#ABABAB;"></div>
<div style="left:75px;top:212px;width:1px;height:2px;background:#ABABAB;"></div>
<div style="left:82px;top:212px;width:1px;height:2px;background:#ABABAB;"></div>
<div style="left:89px;top:210px;width:1px;height:4px;background:#ABABAB;"></div>
<div style="left:48px;top:209.0px;width:10px;height:11px;border-radius:5px/5.5px;background:#9A9AB4;border:3.7px solid #4F52E8;box-sizing:border-box;"></div>
<div style="left:16px;top:204px;width:5px;height:1px;background:#000;"></div>
<div style="left:84px;top:204px;width:5px;height:1px;background:#000;"></div>
<div style="left:86px;top:202px;width:1px;height:5px;background:#000;"></div>
<div style="left:16px;top:244px;width:76px;height:2px;background:#ABABAB;"></div>
<div style="left:17px;top:240px;width:1px;height:4px;background:#ABABAB;"></div>
<div style="left:24px;top:242px;width:1px;height:2px;background:#ABABAB;"></div>
<div style="left:31px;top:242px;width:1px;height:2px;background:#ABABAB;"></div>
<div style="left:39px;top:242px;width:1px;height:2px;background:#ABABAB;"></div>
<div style="left:46px;top:242px;width:1px;height:2px;background:#ABABAB;"></div>
<div style="left:53px;top:242px;width:1px;height:2px;background:#ABABAB;"></div>
<div style="left:60px;top:242px;width:1px;height:2px;background:#ABABAB;"></div>
<div style="left:67px;top:242px;width:1px;height:2px;background:#ABABAB;"></div>
<div style="left:75px;top:242px;width:1px;height:2px;background:#ABABAB;"></div>
<div style="left:82px;top:242px;width:1px;height:2px;background:#ABABAB;"></div>
<div style="left:89px;top:240px;width:1px;height:4px;background:#ABABAB;"></div>
<div style="left:48px;top:239.0px;width:10px;height:11px;border-radius:5px/5.5px;background:#9A9AB4;border:3.7px solid #4F52E8;box-sizing:border-box;"></div>
<div style="left:5px;top:434px;width:76px;height:18px;background:#CDD8F0;"></div>
<div style="left:5px;top:434px;width:76px;height:1px;background:#DCE3F4;"></div>
<div style="left:81px;top:434px;width:1px;height:18px;background:#7E8398;"></div>
<svg style="left:37px;top:440px;" width="14" height="8" viewBox="0 0 14 8"><path d="M0.8 7.2 H12.4 L6.6 0.8 Z" fill="#000"/></svg>
<div style="left:4px;top:458px;width:1095px;height:295px;background:#000;"></div>
<div style="left:5px;top:753px;width:1095px;height:1px;background:#000;"></div>
<div style="left:5px;top:459px;width:95px;height:293px;background:#F8F8FE;"></div>
<div style="left:101px;top:459px;width:30px;height:293px;background:#F8F8FE;"></div>
<div style="left:132px;top:459px;width:963px;height:143px;background:#C0C0C0;"></div>
<div style="left:1088px;top:459px;width:1px;height:143px;background:#6E6E6E;"></div>
<div style="left:1089px;top:459px;width:6px;height:143px;background:#D9D9D9;"></div>
<div style="left:132px;top:530px;width:956px;height:1px;background:#000;"></div>
<div style="left:126px;top:530px;width:4px;height:1px;background:#000;"></div>
<div style="left:128px;top:495px;width:2px;height:1px;background:#000;"></div>
<div style="left:128px;top:566px;width:2px;height:1px;background:#000;"></div>
<div style="left:131px;top:459px;width:1px;height:143px;background:#85858C;"></div>
<div style="left:132px;top:609px;width:963px;height:143px;background:#C0C0C0;"></div>
<div style="left:1088px;top:609px;width:1px;height:143px;background:#6E6E6E;"></div>
<div style="left:1089px;top:609px;width:6px;height:143px;background:#D9D9D9;"></div>
<div style="left:132px;top:680px;width:956px;height:1px;background:#000;"></div>
<div style="left:126px;top:680px;width:4px;height:1px;background:#000;"></div>
<div style="left:128px;top:645px;width:2px;height:1px;background:#000;"></div>
<div style="left:128px;top:716px;width:2px;height:1px;background:#000;"></div>
<div style="left:131px;top:609px;width:1px;height:143px;background:#85858C;"></div>
<div style="left:126px;top:751px;width:4px;height:1px;background:#000;"></div>
<div style="left:131px;top:602px;width:964px;height:7px;background:#000;"></div>
<div style="left:131px;top:603px;width:964px;height:5px;background:#646886;"></div>
<div style="left:101px;top:602px;width:30px;height:7px;background:#F8F8FE;"></div>
<div style="left:101px;top:602px;width:30px;height:1px;background:#000;"></div>
<div style="left:5px;top:459px;width:18px;height:17px;background:#CDD8F0;"></div>
<div style="left:24px;top:459px;width:76px;height:17px;background:#CDD8F0;"></div>
<div style="left:5px;top:477px;width:47px;height:17px;background:#CDD8F0;"></div>
<div style="left:53px;top:477px;width:47px;height:17px;background:#CDD8F0;"></div>
<div style="left:5px;top:476px;width:95px;height:1px;background:#A4AABC;"></div>
<div style="left:22px;top:459px;width:1px;height:17px;background:#A4AABC;"></div>
<div style="left:23px;top:459px;width:1px;height:17px;background:#F4F6FD;"></div>
<div style="left:5px;top:494px;width:95px;height:1px;background:#A4AABC;"></div>
<div style="left:52px;top:477px;width:1px;height:17px;background:#A4AABC;"></div>
<svg style="left:5px;top:459px;" width="18" height="17" viewBox="0 0 18 17"><path d="M6.6 6.4 L13.8 12.6 M13.8 6.4 L6.6 12.6" stroke="#000" stroke-width="1.3"/></svg>
<svg style="left:86px;top:464px;" width="12" height="8" viewBox="0 0 12 8"><path d="M1 1 H11 L6 6.5 Z" fill="#000"/></svg>
<div style="left:16px;top:514px;width:76px;height:2px;background:#ABABAB;"></div>
<div style="left:17px;top:510px;width:1px;height:4px;background:#ABABAB;"></div>
<div style="left:24px;top:512px;width:1px;height:2px;background:#ABABAB;"></div>
<div style="left:31px;top:512px;width:1px;height:2px;background:#ABABAB;"></div>
<div style="left:39px;top:512px;width:1px;height:2px;background:#ABABAB;"></div>
<div style="left:46px;top:512px;width:1px;height:2px;background:#ABABAB;"></div>
<div style="left:53px;top:512px;width:1px;height:2px;background:#ABABAB;"></div>
<div style="left:60px;top:512px;width:1px;height:2px;background:#ABABAB;"></div>
<div style="left:67px;top:512px;width:1px;height:2px;background:#ABABAB;"></div>
<div style="left:75px;top:512px;width:1px;height:2px;background:#ABABAB;"></div>
<div style="left:82px;top:512px;width:1px;height:2px;background:#ABABAB;"></div>
<div style="left:89px;top:510px;width:1px;height:4px;background:#ABABAB;"></div>
<div style="left:48px;top:509.0px;width:10px;height:11px;border-radius:5px/5.5px;background:#9A9AB4;border:3.7px solid #4F52E8;box-sizing:border-box;"></div>
<div style="left:16px;top:504px;width:5px;height:1px;background:#000;"></div>
<div style="left:84px;top:504px;width:5px;height:1px;background:#000;"></div>
<div style="left:86px;top:502px;width:1px;height:5px;background:#000;"></div>
<div style="left:16px;top:544px;width:76px;height:2px;background:#ABABAB;"></div>
<div style="left:17px;top:540px;width:1px;height:4px;background:#ABABAB;"></div>
<div style="left:24px;top:542px;width:1px;height:2px;background:#ABABAB;"></div>
<div style="left:31px;top:542px;width:1px;height:2px;background:#ABABAB;"></div>
<div style="left:39px;top:542px;width:1px;height:2px;background:#ABABAB;"></div>
<div style="left:46px;top:542px;width:1px;height:2px;background:#ABABAB;"></div>
<div style="left:53px;top:542px;width:1px;height:2px;background:#ABABAB;"></div>
<div style="left:60px;top:542px;width:1px;height:2px;background:#ABABAB;"></div>
<div style="left:67px;top:542px;width:1px;height:2px;background:#ABABAB;"></div>
<div style="left:75px;top:542px;width:1px;height:2px;background:#ABABAB;"></div>
<div style="left:82px;top:542px;width:1px;height:2px;background:#ABABAB;"></div>
<div style="left:89px;top:540px;width:1px;height:4px;background:#ABABAB;"></div>
<div style="left:48px;top:539.0px;width:10px;height:11px;border-radius:5px/5.5px;background:#9A9AB4;border:3.7px solid #4F52E8;box-sizing:border-box;"></div>
<div style="left:5px;top:734px;width:76px;height:18px;background:#CDD8F0;"></div>
<div style="left:5px;top:734px;width:76px;height:1px;background:#DCE3F4;"></div>
<div style="left:81px;top:734px;width:1px;height:18px;background:#7E8398;"></div>
<svg style="left:37px;top:740px;" width="14" height="8" viewBox="0 0 14 8"><path d="M0.8 7.2 H12.4 L6.6 0.8 Z" fill="#000"/></svg>
<svg style="left:132px;top:159px;" width="963" height="143" viewBox="0 0 963 143"><g fill="#3232C8"><circle cx="1" cy="72" r="2.05"/><circle cx="17" cy="72" r="2.05"/><circle cx="32" cy="72" r="2.05"/><circle cx="48" cy="72" r="2.05"/><circle cx="64" cy="72" r="2.05"/><circle cx="79" cy="72" r="2.05"/><circle cx="95" cy="72" r="2.05"/><circle cx="110" cy="72" r="2.05"/><circle cx="126" cy="72" r="2.05"/><circle cx="142" cy="72" r="2.05"/><circle cx="157" cy="72" r="2.05"/><circle cx="173" cy="72" r="2.05"/><circle cx="189" cy="72" r="2.05"/><circle cx="204" cy="72" r="2.05"/><circle cx="220" cy="72" r="2.05"/><circle cx="235" cy="72" r="2.05"/><circle cx="251" cy="72" r="2.05"/><circle cx="267" cy="72" r="2.05"/><circle cx="282" cy="72" r="2.05"/><circle cx="298" cy="72" r="2.05"/><circle cx="314" cy="72" r="2.05"/><circle cx="329" cy="72" r="2.05"/><circle cx="345" cy="72" r="2.05"/><circle cx="360" cy="72" r="2.05"/><circle cx="376" cy="72" r="2.05"/><circle cx="392" cy="72" r="2.05"/><rect x="406" y="54" width="1" height="18"/><circle cx="407" cy="54" r="2.05"/><rect x="422" y="38" width="1" height="34"/><circle cx="423" cy="38" r="2.05"/><rect x="438" y="23" width="1" height="49"/><circle cx="439" cy="23" r="2.05"/><rect x="453" y="12" width="1" height="60"/><circle cx="454" cy="12" r="2.05"/><rect x="469" y="4" width="1" height="68"/><circle cx="470" cy="4" r="2.05"/><rect x="484" y="1" width="1" height="71"/><circle cx="485" cy="1" r="2.05"/><rect x="500" y="2" width="1" height="70"/><circle cx="501" cy="2" r="2.05"/><rect x="516" y="8" width="1" height="64"/><circle cx="517" cy="8" r="2.05"/><rect x="531" y="17" width="1" height="55"/><circle cx="532" cy="17" r="2.05"/><rect x="547" y="30" width="1" height="42"/><circle cx="548" cy="30" r="2.05"/><rect x="563" y="46" width="1" height="26"/><circle cx="564" cy="46" r="2.05"/><rect x="578" y="63" width="1" height="9"/><circle cx="579" cy="63" r="2.05"/><rect x="594" y="71" width="1" height="11"/><circle cx="595" cy="81" r="2.05"/><rect x="609" y="71" width="1" height="28"/><circle cx="610" cy="98" r="2.05"/><rect x="625" y="71" width="1" height="44"/><circle cx="626" cy="114" r="2.05"/><rect x="641" y="71" width="1" height="57"/><circle cx="642" cy="127" r="2.05"/><rect x="656" y="71" width="1" height="66"/><circle cx="657" cy="136" r="2.05"/><rect x="672" y="71" width="1" height="72"/><circle cx="673" cy="142" r="2.05"/><rect x="688" y="71" width="1" height="73"/><circle cx="689" cy="143" r="2.05"/><rect x="703" y="71" width="1" height="70"/><circle cx="704" cy="140" r="2.05"/><rect x="719" y="71" width="1" height="62"/><circle cx="720" cy="132" r="2.05"/><rect x="734" y="71" width="1" height="51"/><circle cx="735" cy="121" r="2.05"/><rect x="750" y="71" width="1" height="36"/><circle cx="751" cy="106" r="2.05"/><rect x="766" y="71" width="1" height="20"/><circle cx="767" cy="90" r="2.05"/><circle cx="782" cy="72" r="2.05"/><circle cx="798" cy="72" r="2.05"/><circle cx="814" cy="72" r="2.05"/><circle cx="829" cy="72" r="2.05"/><circle cx="845" cy="72" r="2.05"/><circle cx="860" cy="72" r="2.05"/><circle cx="876" cy="72" r="2.05"/><circle cx="892" cy="72" r="2.05"/><circle cx="907" cy="72" r="2.05"/><circle cx="923" cy="72" r="2.05"/><circle cx="939" cy="72" r="2.05"/><circle cx="954" cy="72" r="2.05"/></g></svg>
<svg style="left:132px;top:309px;" width="963" height="143" viewBox="0 0 963 143"><g fill="#3232C8"><circle cx="1" cy="72" r="2.05"/><circle cx="17" cy="72" r="2.05"/><circle cx="32" cy="72" r="2.05"/><circle cx="48" cy="72" r="2.05"/><circle cx="64" cy="72" r="2.05"/><circle cx="79" cy="72" r="2.05"/><circle cx="95" cy="72" r="2.05"/><circle cx="110" cy="72" r="2.05"/><circle cx="126" cy="72" r="2.05"/><circle cx="142" cy="72" r="2.05"/><circle cx="157" cy="72" r="2.05"/><circle cx="173" cy="72" r="2.05"/><circle cx="189" cy="72" r="2.05"/><circle cx="204" cy="72" r="2.05"/><circle cx="220" cy="72" r="2.05"/><circle cx="235" cy="72" r="2.05"/><circle cx="251" cy="72" r="2.05"/><circle cx="267" cy="72" r="2.05"/><circle cx="282" cy="72" r="2.05"/><circle cx="298" cy="72" r="2.05"/><circle cx="314" cy="72" r="2.05"/><circle cx="329" cy="72" r="2.05"/><circle cx="345" cy="72" r="2.05"/><rect x="359" y="54" width="1" height="18"/><circle cx="360" cy="54" r="2.05"/><rect x="375" y="38" width="1" height="34"/><circle cx="376" cy="38" r="2.05"/><rect x="391" y="23" width="1" height="49"/><circle cx="392" cy="23" r="2.05"/><rect x="406" y="12" width="1" height="60"/><circle cx="407" cy="12" r="2.05"/><rect x="422" y="4" width="1" height="68"/><circle cx="423" cy="4" r="2.05"/><rect x="438" y="1" width="1" height="71"/><circle cx="439" cy="1" r="2.05"/><rect x="453" y="2" width="1" height="70"/><circle cx="454" cy="2" r="2.05"/><rect x="469" y="8" width="1" height="64"/><circle cx="470" cy="8" r="2.05"/><rect x="484" y="17" width="1" height="55"/><circle cx="485" cy="17" r="2.05"/><rect x="500" y="30" width="1" height="42"/><circle cx="501" cy="30" r="2.05"/><rect x="516" y="46" width="1" height="26"/><circle cx="517" cy="46" r="2.05"/><rect x="531" y="63" width="1" height="9"/><circle cx="532" cy="63" r="2.05"/><rect x="547" y="71" width="1" height="11"/><circle cx="548" cy="81" r="2.05"/><rect x="563" y="71" width="1" height="28"/><circle cx="564" cy="98" r="2.05"/><rect x="578" y="71" width="1" height="44"/><circle cx="579" cy="114" r="2.05"/><rect x="594" y="71" width="1" height="57"/><circle cx="595" cy="127" r="2.05"/><rect x="609" y="71" width="1" height="66"/><circle cx="610" cy="136" r="2.05"/><rect x="625" y="71" width="1" height="72"/><circle cx="626" cy="142" r="2.05"/><rect x="641" y="71" width="1" height="73"/><circle cx="642" cy="143" r="2.05"/><rect x="656" y="71" width="1" height="70"/><circle cx="657" cy="140" r="2.05"/><rect x="672" y="71" width="1" height="62"/><circle cx="673" cy="132" r="2.05"/><rect x="688" y="71" width="1" height="51"/><circle cx="689" cy="121" r="2.05"/><rect x="703" y="71" width="1" height="36"/><circle cx="704" cy="106" r="2.05"/><rect x="719" y="71" width="1" height="20"/><circle cx="720" cy="90" r="2.05"/><circle cx="735" cy="72" r="2.05"/><circle cx="751" cy="72" r="2.05"/><circle cx="767" cy="72" r="2.05"/><circle cx="782" cy="72" r="2.05"/><circle cx="798" cy="72" r="2.05"/><circle cx="814" cy="72" r="2.05"/><circle cx="829" cy="72" r="2.05"/><circle cx="845" cy="72" r="2.05"/><circle cx="860" cy="72" r="2.05"/><circle cx="876" cy="72" r="2.05"/><circle cx="892" cy="72" r="2.05"/><circle cx="907" cy="72" r="2.05"/><circle cx="923" cy="72" r="2.05"/><circle cx="939" cy="72" r="2.05"/><circle cx="954" cy="72" r="2.05"/></g></svg>
<svg style="left:132px;top:459px;" width="963" height="143" viewBox="0 0 963 143"><g fill="#3232C8"><rect x="0" y="71" width="1" height="6"/><circle cx="1" cy="76" r="2.05"/><rect x="136" y="65" width="1" height="7"/><circle cx="137" cy="65" r="2.05"/><rect x="272" y="71" width="1" height="12"/><circle cx="273" cy="82" r="2.05"/><rect x="408" y="37" width="1" height="35"/><circle cx="409" cy="37" r="2.05"/><rect x="544" y="35" width="1" height="37"/><circle cx="545" cy="35" r="2.05"/><rect x="680" y="71" width="1" height="63"/><circle cx="681" cy="133" r="2.05"/><rect x="816" y="71" width="1" height="7"/><circle cx="817" cy="77" r="2.05"/><circle cx="953" cy="71" r="2.05"/></g></svg>
<svg style="left:132px;top:609px;" width="963" height="143" viewBox="0 0 963 143"><g fill="#3232C8"><rect x="0" y="71" width="1" height="5"/><circle cx="1" cy="75" r="2.05"/><rect x="136" y="67" width="1" height="5"/><circle cx="137" cy="67" r="2.05"/><rect x="272" y="71" width="1" height="10"/><circle cx="273" cy="80" r="2.05"/><rect x="408" y="15" width="1" height="57"/><circle cx="409" cy="15" r="2.05"/><rect x="544" y="71" width="1" height="7"/><circle cx="545" cy="77" r="2.05"/><rect x="680" y="71" width="1" height="56"/><circle cx="681" cy="126" r="2.05"/><rect x="816" y="62" width="1" height="10"/><circle cx="817" cy="62" r="2.05"/><rect x="952" y="71" width="1" height="8"/><circle cx="953" cy="78" r="2.05"/></g></svg>
<span style="left:23.5px;top:2.84px;font-size:12px;color:#000;letter-spacing:-0.486px;">Phasetest</span>
<span style="left:7.5px;top:23.64px;font-size:12px;color:#000;letter-spacing:-0.461px;">File</span>
<span style="left:39px;top:23.64px;font-size:12px;color:#000;letter-spacing:-0.172px;">Edit</span>
<span style="left:73px;top:23.64px;font-size:12px;color:#000;letter-spacing:-0.393px;">Select</span>
<span style="left:118px;top:23.64px;font-size:12px;color:#000;letter-spacing:-0.199px;">View</span>
<span style="left:157.5px;top:23.64px;font-size:12px;color:#000;letter-spacing:-0.156px;">Transport</span>
<span style="left:221px;top:23.64px;font-size:12px;color:#000;letter-spacing:-0.427px;">Tracks</span>
<span style="left:268.5px;top:23.64px;font-size:12px;color:#000;letter-spacing:-0.443px;">Generate</span>
<span style="left:329.2px;top:23.64px;font-size:12px;color:#000;letter-spacing:-0.161px;">Effect</span>
<span style="left:373.2px;top:23.64px;font-size:12px;color:#000;letter-spacing:-0.272px;">Analyze</span>
<span style="left:428px;top:23.64px;font-size:12px;color:#000;letter-spacing:-0.103px;">Tools</span>
<span style="left:470px;top:23.64px;font-size:12px;color:#000;letter-spacing:-0.047px;">Help</span>
<span style="left:464.3px;top:41.97px;font-size:10.67px;color:#000;">L</span>
<span style="left:464.3px;top:55.97px;font-size:10.67px;color:#000;">R</span>
<span style="left:506.45px;top:48.97px;font-size:10.67px;color:#000;letter-spacing:0.031px;">-54</span>
<span style="left:546.45px;top:48.97px;font-size:10.67px;color:#000;letter-spacing:0.031px;">-48</span>
<span style="left:585.45px;top:48.97px;font-size:10.67px;color:#000;letter-spacing:0.031px;">-42</span>
<span style="left:745.45px;top:48.97px;font-size:10.67px;color:#000;letter-spacing:0.031px;">-18</span>
<span style="left:784.45px;top:48.97px;font-size:10.67px;color:#000;letter-spacing:0.031px;">-12</span>
<span style="left:827.2px;top:48.97px;font-size:10.67px;color:#000;letter-spacing:0.258px;">-6</span>
<span style="left:866.2px;top:48.97px;font-size:10.67px;color:#000;letter-spacing:0.062px;">0</span>
<span style="left:617.3px;top:50.17px;font-size:10.67px;color:#000;letter-spacing:-0.085px;">Click to Start Monitoring</span>
<span style="left:924.3px;top:41.97px;font-size:10.67px;color:#000;">L</span>
<span style="left:924.3px;top:55.97px;font-size:10.67px;color:#000;">R</span>
<span style="left:967.45px;top:48.97px;font-size:10.67px;color:#000;letter-spacing:0.031px;">-54</span>
<span style="left:1007.45px;top:48.97px;font-size:10.67px;color:#000;letter-spacing:0.031px;">-48</span>
<span style="left:1046.45px;top:48.97px;font-size:10.67px;color:#000;letter-spacing:0.031px;">-42</span>
<span style="left:1084.95px;top:48.97px;font-size:10.67px;color:#000;letter-spacing:0.031px;">-36</span>
<span style="left:15.8px;top:104.84px;font-size:12px;color:#000;letter-spacing:-0.167px;">MME</span>
<span style="left:193.8px;top:104.84px;font-size:12px;color:#000;letter-spacing:0.108px;">Line In (High Definition Audio</span>
<span style="left:448.8px;top:104.84px;font-size:12px;color:#000;letter-spacing:-0.281px;width:132.3px;overflow:hidden;">2 (Stereo) Recording Channels</span>
<span style="left:630.8px;top:104.84px;font-size:12px;color:#000;letter-spacing:0.112px;">AV Receiver (NVIDIA High Defini</span>
<span style="left:109.30000000000001px;top:132.84px;font-size:12px;color:#000;font-weight:bold;letter-spacing:0.117px;">0.000000</span>
<span style="left:229.3px;top:132.84px;font-size:12px;color:#000;font-weight:bold;letter-spacing:0.117px;">0.000020</span>
<span style="left:349.3px;top:132.84px;font-size:12px;color:#000;font-weight:bold;letter-spacing:0.117px;">0.000040</span>
<span style="left:469.3px;top:132.84px;font-size:12px;color:#000;font-weight:bold;letter-spacing:0.117px;">0.000060</span>
<span style="left:589.3px;top:132.84px;font-size:12px;color:#000;font-weight:bold;letter-spacing:0.117px;">0.000080</span>
<span style="left:709.3px;top:132.84px;font-size:12px;color:#000;font-weight:bold;letter-spacing:0.117px;">0.000100</span>
<span style="left:829.3px;top:132.84px;font-size:12px;color:#000;font-weight:bold;letter-spacing:0.117px;">0.000120</span>
<span style="left:949.3px;top:132.84px;font-size:12px;color:#000;font-weight:bold;letter-spacing:0.117px;">0.000140</span>
<span style="left:1069.3px;top:132.84px;font-size:12px;color:#000;font-weight:bold;letter-spacing:0.117px;">0.000160</span>
<span style="left:39.3px;top:132.84px;font-size:12px;color:#000;font-weight:bold;letter-spacing:0.156px;">020</span>
<span style="left:109.01px;top:160.84px;font-size:12px;color:#000;font-weight:bold;">1.0</span>
<span style="left:109.01px;top:189.14px;font-size:12px;color:#000;">0.5</span>
<span style="left:109.01px;top:224.64px;font-size:12px;color:#000;font-weight:bold;">0.0</span>
<span style="left:105.01px;top:260.84px;font-size:12px;color:#000;">-0.5</span>
<span style="left:105.01px;top:287.84px;font-size:12px;color:#000;font-weight:bold;">-1.0</span>
<span style="left:109.01px;top:310.84px;font-size:12px;color:#000;font-weight:bold;">1.0</span>
<span style="left:109.01px;top:339.14px;font-size:12px;color:#000;">0.5</span>
<span style="left:109.01px;top:374.64px;font-size:12px;color:#000;font-weight:bold;">0.0</span>
<span style="left:105.01px;top:410.84px;font-size:12px;color:#000;">-0.5</span>
<span style="left:105.01px;top:437.84px;font-size:12px;color:#000;font-weight:bold;">-1.0</span>
<span style="left:26.2px;top:162.97px;font-size:10.67px;color:#000;letter-spacing:-0.020px;">15360Hzsine</span>
<span style="left:17.3px;top:180.97px;font-size:10.67px;color:#000;letter-spacing:-0.326px;">Mute</span>
<span style="left:66px;top:180.97px;font-size:10.67px;color:#000;letter-spacing:-0.207px;">Solo</span>
<span style="left:16px;top:228.96px;font-size:9.5px;color:#000;">L</span>
<span style="left:83px;top:228.96px;font-size:9.5px;color:#000;">R</span>
<span style="left:8px;top:259.97px;font-size:10.67px;color:#000;letter-spacing:0.068px;">Stereo, 384000Hz</span>
<span style="left:8px;top:271.97px;font-size:10.67px;color:#000;letter-spacing:0.103px;">32-bit float</span>
<span style="left:109.01px;top:460.84px;font-size:12px;color:#000;font-weight:bold;">1.0</span>
<span style="left:109.01px;top:489.14px;font-size:12px;color:#000;">0.5</span>
<span style="left:109.01px;top:524.64px;font-size:12px;color:#000;font-weight:bold;">0.0</span>
<span style="left:105.01px;top:560.84px;font-size:12px;color:#000;">-0.5</span>
<span style="left:105.01px;top:587.84px;font-size:12px;color:#000;font-weight:bold;">-1.0</span>
<span style="left:109.01px;top:610.84px;font-size:12px;color:#000;font-weight:bold;">1.0</span>
<span style="left:109.01px;top:639.14px;font-size:12px;color:#000;">0.5</span>
<span style="left:109.01px;top:674.64px;font-size:12px;color:#000;font-weight:bold;">0.0</span>
<span style="left:105.01px;top:710.84px;font-size:12px;color:#000;">-0.5</span>
<span style="left:105.01px;top:737.84px;font-size:12px;color:#000;font-weight:bold;">-1.0</span>
<span style="left:26.2px;top:462.97px;font-size:10.67px;color:#000;letter-spacing:-0.020px;">15360Hzsine</span>
<span style="left:17.3px;top:480.97px;font-size:10.67px;color:#000;letter-spacing:-0.326px;">Mute</span>
<span style="left:66px;top:480.97px;font-size:10.67px;color:#000;letter-spacing:-0.207px;">Solo</span>
<span style="left:16px;top:528.96px;font-size:9.5px;color:#000;">L</span>
<span style="left:83px;top:528.96px;font-size:9.5px;color:#000;">R</span>
<span style="left:8px;top:559.97px;font-size:10.67px;color:#000;letter-spacing:0.054px;">Stereo, 44100Hz</span>
<span style="left:8px;top:571.97px;font-size:10.67px;color:#000;letter-spacing:0.103px;">32-bit float</span>
</body></html>
